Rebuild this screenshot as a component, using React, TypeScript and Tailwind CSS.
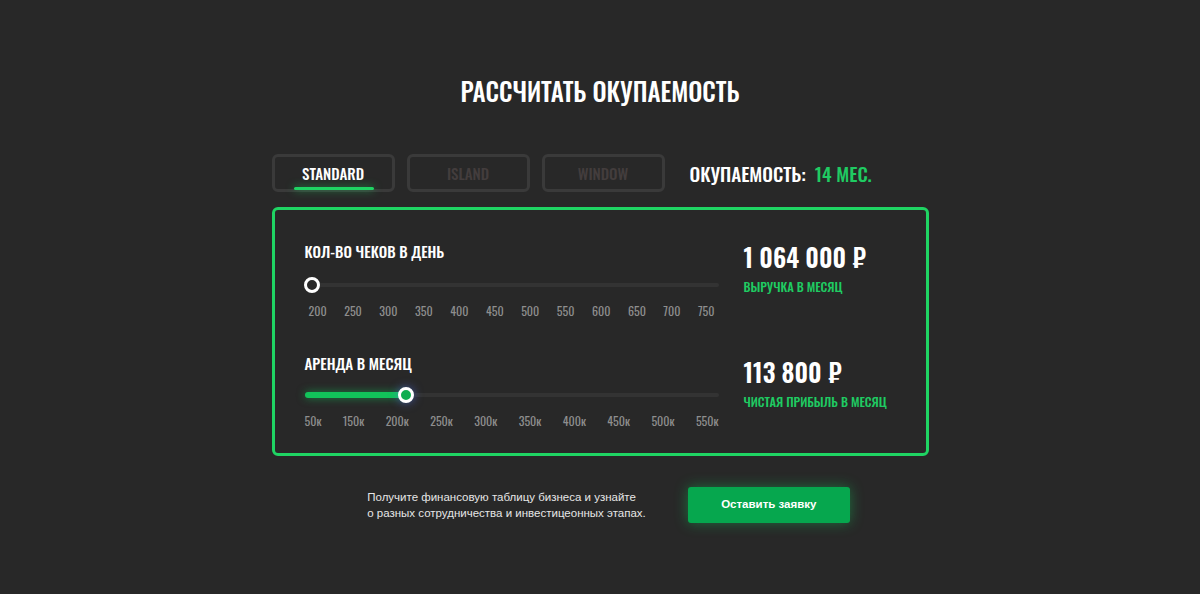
import React from "react";

const COND = "font-['Oswald','Roboto_Condensed','Liberation_Sans_Narrow','DejaVu_Sans_Condensed',Roboto,sans-serif]";

function Tab({ label, active }: { label: string; active?: boolean }) {
  return (
    <div className="relative flex h-[38px] w-[123px] items-center justify-center rounded-[6px] border-[3px] border-[#3a3a3a]">
      <span className={`${COND} text-[15px] font-medium uppercase ${active ? "text-white" : "text-[#433d3d]"}`}>{label}</span>
      {active && (
        <div className="absolute bottom-[-1px] left-[19px] h-[3px] w-[80px] rounded-full bg-[#1fd463] shadow-[0_0_8px_rgba(31,212,99,0.7)]" />
      )}
    </div>
  );
}

function Slider({
  label,
  ticks,
  pos,
  filled,
  pad,
  gap,
}: {
  label: string;
  ticks: string[];
  pos: number;
  filled?: boolean;
  pad?: boolean;
  gap: number;
}) {
  return (
    <div className="flex flex-col">
      <div className={`${COND} text-[15px] font-medium uppercase leading-[20px] text-white`}>{label}</div>
      <div className="relative h-[16px] w-[414px]" style={{ marginTop: gap }}>
        <div className="absolute left-0 right-0 top-[6px] h-[4px] rounded-full bg-[#333333]" />
        {filled && (
          <div
            className="absolute left-0 top-[5px] h-[6px] rounded-full bg-[#12c35a] shadow-[0_0_8px_rgba(18,195,90,0.6)]"
            style={{ width: pos }}
          />
        )}
        <div
          className={`absolute top-[0px] h-[16px] w-[16px] -translate-x-1/2 rounded-full border-[3px] border-white ${
            filled ? "bg-[#0fae50] shadow-[0_0_10px_rgba(90,120,255,0.55)]" : "bg-[#282828]"
          }`}
          style={{ left: pos }}
        />
      </div>
      <div className={`mt-[10px] flex w-[414px] justify-between ${pad ? "px-[4px]" : ""} ${COND} text-[12px] leading-[16px] text-[#8e8e8e]`}>
        {ticks.map((t) => (
          <span key={t}>{t}</span>
        ))}
      </div>
    </div>
  );
}

function Stat({ value, label }: { value: string; label: string }) {
  return (
    <div className="flex flex-col">
      <div className={`${COND} text-[25px] font-semibold leading-[30px] text-white`}>{value}</div>
      <div className={`${COND} mt-[7px] text-[12.5px] font-medium uppercase leading-[16px] text-[#1fcb62]`}>{label}</div>
    </div>
  );
}

export default function App() {
  return (
    <div className="min-h-[594px] w-full bg-[#282828]">
      <div className="flex flex-col items-center pt-[74px]">
        <h1 className={`${COND} text-[25px] font-medium uppercase leading-[34px] text-white`}>Рассчитать окупаемость</h1>
        <div className="mt-[46px] flex w-[657px] items-center gap-[12px]">
          <Tab label="Standard" active />
          <Tab label="Island" />
          <Tab label="Window" />
          <div className={`${COND} ml-[13px] flex items-center gap-[9px] text-[19px] font-medium uppercase`}>
            <span className="text-white">Окупаемость:</span>
            <span className="text-[#1fcb62]">14 мес.</span>
          </div>
        </div>
        <div className="mt-[15px] flex h-[249px] w-[657px] rounded-[6px] border-[3px] border-[#1fd463] pl-[30px]">
          <div className="flex flex-col gap-[34px] pt-[31px]">
            <Slider
              label="Кол-во чеков в день"
              ticks={["200", "250", "300", "350", "400", "450", "500", "550", "600", "650", "700", "750"]}
              pos={7}
              pad
              gap={16}
            />
            <Slider
              label="Аренда в месяц"
              ticks={["50к", "150к", "200к", "250к", "300к", "350к", "400к", "450к", "500к", "550к"]}
              pos={101}
              filled
              gap={14}
            />
          </div>
          <div className="ml-[25px] flex flex-col gap-[62px] pt-[32px]">
            <Stat value="1 064 000 ₽" label="Выручка в месяц" />
            <Stat value="113 800 ₽" label="Чистая прибыль в месяц" />
          </div>
        </div>
        <div className="mt-[31px] ml-[17px] flex items-center gap-[42px]">
          <p className="font-['Liberation_Sans',Arial,sans-serif] text-[11.5px] leading-[16px] text-[#e6e6e6]">
            Получите финансовую таблицу бизнеса и узнайте
            <br />о разных сотрудничества и инвестицеонных этапах.
          </p>
          <button className="h-[36px] w-[162px] rounded-[3px] bg-[#06a74e] font-['Liberation_Sans',Arial,sans-serif] text-[11.5px] font-bold text-white shadow-[0_0_14px_rgba(20,200,90,0.45)]">
            Оставить заявку
          </button>
        </div>
      </div>
    </div>
  );
}
